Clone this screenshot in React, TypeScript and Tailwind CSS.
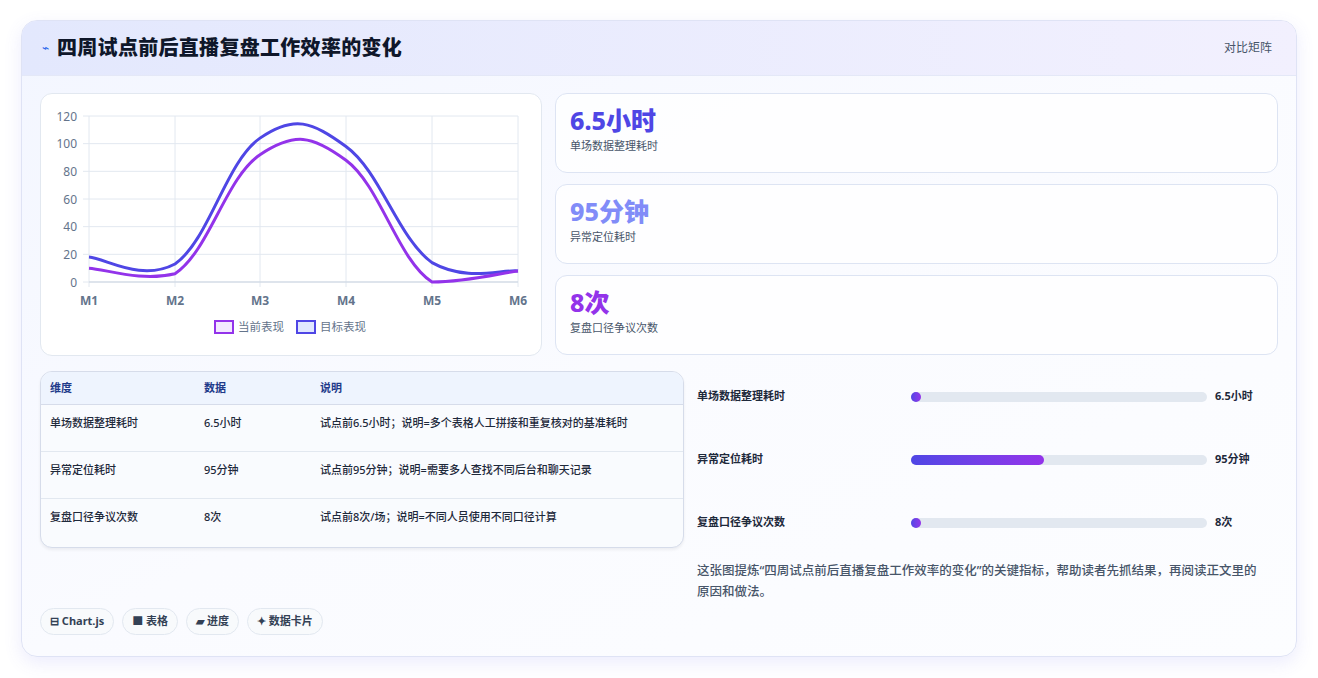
import React from "react";

const F = { fontFamily: '"Noto Sans","Noto Sans CJK SC",sans-serif' };

const xs = [88, 174, 259, 345, 431, 517];
const yOf = (v: number) => 281 - (v * 166) / 120;
function path(data: number[]) {
  const p = data.map((v, i) => [xs[i], yOf(v)]);
  let d = `M${p[0][0]},${p[0][1]}`;
  const t = 0.4;
  const maxY = yOf(0);
  for (let i = 0; i < p.length - 1; i++) {
    const p0 = p[i - 1] || p[i];
    const p1 = p[i];
    const p2 = p[i + 1];
    const p3 = p[i + 2] || p2;
    const c1 = [p1[0] + ((p2[0] - p0[0]) * t) / 2, Math.min(maxY, p1[1] + ((p2[1] - p0[1]) * t) / 2)];
    const c2 = [p2[0] - ((p3[0] - p1[0]) * t) / 2, Math.min(maxY, p2[1] - ((p3[1] - p1[1]) * t) / 2)];
    d += ` C${c1[0]},${c1[1]} ${c2[0]},${c2[1]} ${p2[0]},${p2[1]}`;
  }
  return d;
}

function Chart() {
  const ticks = [0, 20, 40, 60, 80, 100, 120];
  return (
    <svg width="501" height="262" viewBox="40 93 501 262" className="block">
      {ticks.map((t) => (
        <g key={t}>
          <line x1={82} x2={517} y1={yOf(t)} y2={yOf(t)} stroke="#e2e8f0" strokeWidth="1" />
          <text x={76} y={yOf(t) + 4.5} textAnchor="end" fontSize="12" fill="#64748b" fontFamily="Noto Sans">{t}</text>
        </g>
      ))}
      {xs.map((x, i) => (
        <g key={x}>
          <line x1={x} x2={x} y1={115} y2={286} stroke="#e2e8f0" strokeWidth="1" />
          <text x={x} y={304} textAnchor="middle" fontSize="12" fontWeight="700" fill="#64748b" fontFamily="Noto Sans">M{i + 1}</text>
        </g>
      ))}
      <line x1={88} x2={517} y1={281} y2={281} stroke="#cbd5e1" />
      <path d={path([18, 13, 104, 98, 14, 8])} fill="none" stroke="#4f46e5" strokeWidth="3" />
      <path d={path([10, 6, 92, 88, 0, 8])} fill="none" stroke="#9333ea" strokeWidth="3" />
      <rect x={214} y={320} width={18} height={12} fill="#f3e8ff" stroke="#9333ea" strokeWidth="2" />
      <text x={237} y={330} fontSize="11.5" fill="#64748b" fontFamily="Noto Sans CJK SC">当前表现</text>
      <rect x={296} y={320} width={18} height={12} fill="#e0e7ff" stroke="#4f46e5" strokeWidth="2" />
      <text x={319} y={330} fontSize="11.5" fill="#64748b" fontFamily="Noto Sans CJK SC">目标表现</text>
    </svg>
  );
}

const kpis = [
  { v: "6.5小时", l: "单场数据整理耗时", c: "text-[#4f46e5]" },
  { v: "95分钟", l: "异常定位耗时", c: "text-[#818cf8]" },
  { v: "8次", l: "复盘口径争议次数", c: "text-[#9333ea]" },
];
const rows = [
  ["单场数据整理耗时", "6.5小时", "试点前6.5小时；说明=多个表格人工拼接和重复核对的基准耗时"],
  ["异常定位耗时", "95分钟", "试点前95分钟；说明=需要多人查找不同后台和聊天记录"],
  ["复盘口径争议次数", "8次", "试点前8次/场；说明=不同人员使用不同口径计算"],
];
const bars = [
  { l: "单场数据整理耗时", v: "6.5小时", w: 3 },
  { l: "异常定位耗时", v: "95分钟", w: 45 },
  { l: "复盘口径争议次数", v: "8次", w: 3 },
];

export default function App() {
  return (
    <div style={F} className="w-[1318px] h-[678px] bg-white pt-[20px] pl-[21px]">
      <div className="w-[1276px] h-[637px] rounded-[16px] border border-[#dfe3f5] bg-gradient-to-br from-[#f3f6ff] via-[#fafbff] to-[#fcfdff] shadow-[0_6px_18px_rgba(99,102,241,0.12)] overflow-hidden">
        <div className="h-[55px] flex items-center justify-between px-[20px] bg-gradient-to-r from-[#e3e8fd] to-[#f2f0fe] border-b border-[#e4e8f7]">
          <div className="flex items-center gap-[8px]">
            <span className="text-[#2563eb] text-[12px]">⌁</span>
            <span className="text-[20px] font-extrabold text-[#0f172a] tracking-[0.3px]">四周试点前后直播复盘工作效率的变化</span>
          </div>
          <span className="text-[12px] text-[#475569] mr-[4px]">对比矩阵</span>
        </div>
        <div className="px-[18px] pt-[17px]">
          <div className="flex gap-[13px]">
            <div className="w-[502px] h-[263px] rounded-[12px] bg-white border border-[#e2e8f0]">
              <Chart />
            </div>
            <div className="flex-1 flex flex-col gap-[11px]">
              {kpis.map((k) => (
                <div key={k.l} className="h-[80px] rounded-[12px] bg-white/80 border border-[#dde4f3] px-[14px] pt-[9px]">
                  <div className={`text-[25px] font-extrabold leading-[34px] ${k.c}`}>{k.v}</div>
                  <div className="text-[11px] text-[#475569] mt-[1px]">{k.l}</div>
                </div>
              ))}
            </div>
          </div>
          <div className="flex gap-[13px] mt-[15px]">
            <div className="w-[644px] h-[177px] rounded-[12px] border border-[#d6dcea] bg-[#f9fbfe] overflow-hidden shadow-[0_2px_3px_rgba(15,23,42,0.06)] text-[11px] font-medium">
              <div className="h-[33px] flex items-center bg-[#eef4fe] border-b border-[#d6dcea] font-bold text-[#1e3a8a]">
                <div className="w-[163px] pl-[9px]">维度</div>
                <div className="w-[116px]">数据</div>
                <div>说明</div>
              </div>
              {rows.map((r, i) => (
                <div key={i} className={`h-[47px] flex pt-[10px] text-[#1e293b] ${i < 2 ? "border-b border-[#e2e8f0]" : ""}`}>
                  <div className="w-[163px] pl-[9px]">{r[0]}</div>
                  <div className="w-[116px]">{r[1]}</div>
                  <div>{r[2]}</div>
                </div>
              ))}
            </div>
            <div className="flex-1">
              <div className="flex flex-col gap-[44px] pt-[16px]">
                {bars.map((b) => (
                  <div key={b.l} className="h-[19px] flex items-center text-[11px] font-bold text-[#1e293b]">
                    <div className="w-[214px]">{b.l}</div>
                    <div className="w-[296px] h-[10px] rounded-full bg-[#e2e8f0]">
                      <div className="h-full rounded-full bg-gradient-to-r from-[#4f46e5] to-[#9333ea]" style={{ width: `${b.w}%`, minWidth: 10 }} />
                    </div>
                    <div className="ml-[8px]">{b.v}</div>
                  </div>
                ))}
              </div>
              <p className="mt-[28px] text-[12.5px] leading-[21px] font-medium text-[#475569] w-[568px]">
                这张图提炼“四周试点前后直播复盘工作效率的变化”的关键指标，帮助读者先抓结果，再阅读正文里的原因和做法。
              </p>
            </div>
          </div>
          <div className="flex gap-[8px] mt-[6px] text-[11px] font-bold text-[#334155]">
            {["⊟ Chart.js", "■ 表格", "▰ 进度", "✦ 数据卡片"].map((c) => (
              <span key={c} className="h-[27px] px-[9px] flex items-center rounded-full border border-[#e2e8f0] bg-[#f8fafc]">{c}</span>
            ))}
          </div>
        </div>
      </div>
    </div>
  );
}
